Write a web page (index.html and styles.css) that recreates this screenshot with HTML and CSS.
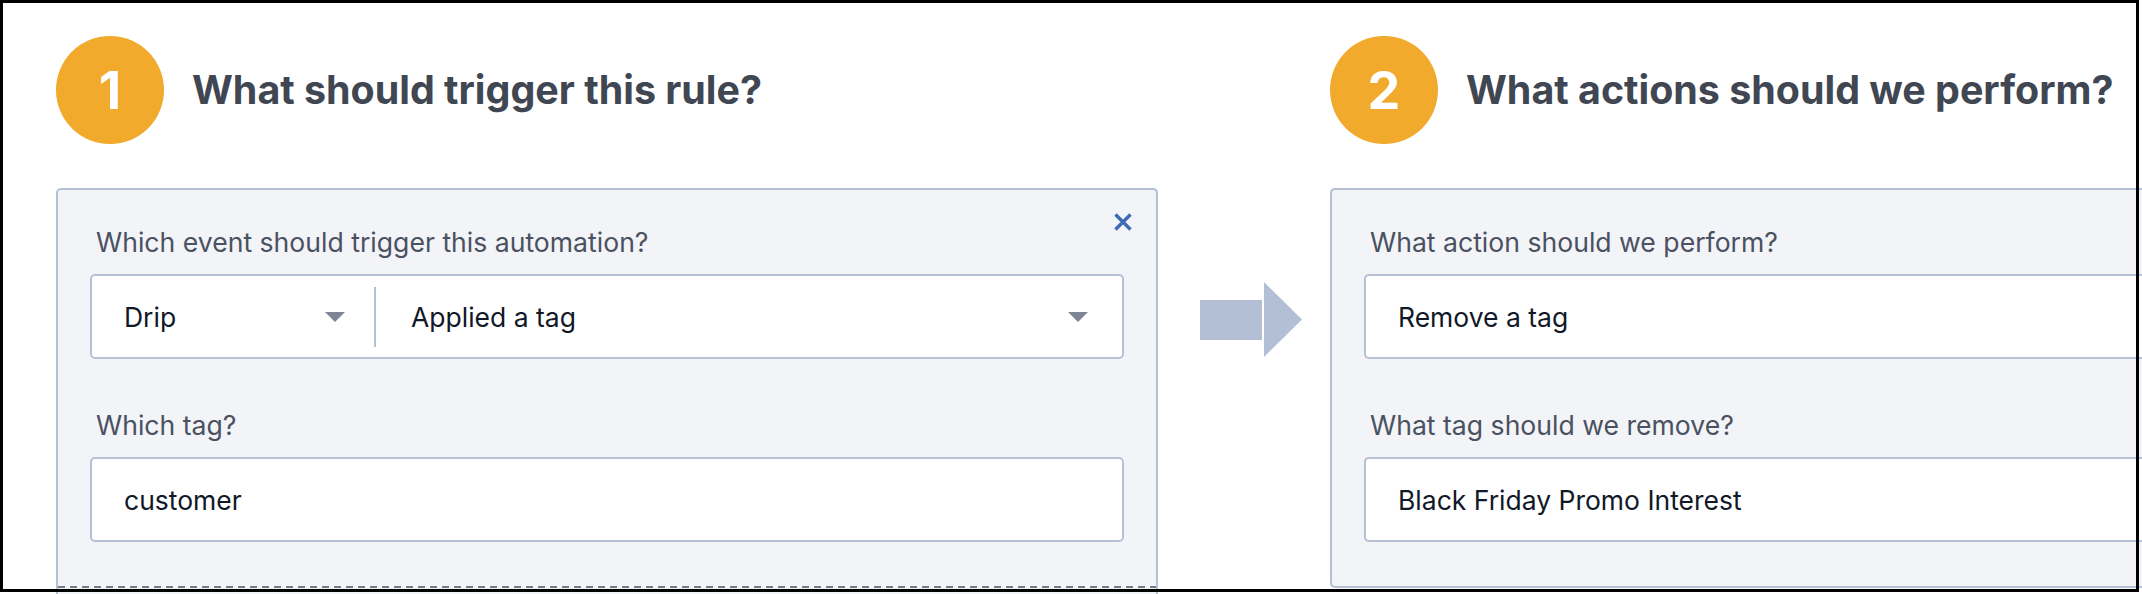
FILE: index.html
```html
<!DOCTYPE html>
<html lang="en">
<head>
<meta charset="utf-8">
<title>Rule builder</title>
<link rel="stylesheet" href="styles.css">
</head>
<body>
<main class="rule">
  <header class="step">
    <span class="step-num">1</span>
    <h2 class="step-title">What should trigger this rule?</h2>
  </header>
  <div class="spacer"></div>
  <header class="step">
    <span class="step-num">2</span>
    <h2 class="step-title">What actions should we perform?</h2>
  </header>

  <section class="panel panel-trigger">
    <button class="close" aria-label="Remove">
      <svg width="20" height="20" viewBox="0 0 20 20"><path d="M2.5 2.5 L17.5 17.5 M17.5 2.5 L2.5 17.5" stroke="#3d6bb4" stroke-width="3.4" stroke-linecap="butt" fill="none"/></svg>
    </button>
    <div class="field">
      <label class="label">Which event should trigger this automation?</label>
      <div class="box select-pair">
        <div class="seg seg-provider">
          <span class="value">Drip</span>
          <span class="caret"></span>
        </div>
        <span class="divider"></span>
        <div class="seg seg-event">
          <span class="value">Applied a tag</span>
          <span class="caret"></span>
        </div>
      </div>
    </div>
    <div class="field">
      <label class="label">Which tag?</label>
      <div class="box text-box"><span class="value">customer</span></div>
    </div>
    <div class="panel-more"></div>
  </section>

  <div class="arrow-cell">
    <svg class="arrow" width="102" height="75" viewBox="0 0 102 75"><rect x="0" y="18" width="62" height="40" fill="#b3bfd4"/><polygon points="64,0 102,37.5 64,75" fill="#b3bfd4"/></svg>
  </div>

  <section class="panel panel-action">
    <div class="field">
      <label class="label">What action should we perform?</label>
      <div class="box text-box"><span class="value">Remove a tag</span></div>
    </div>
    <div class="field">
      <label class="label">What tag should we remove?</label>
      <div class="box text-box"><span class="value">Black Friday Promo Interest</span></div>
    </div>
  </section>
</main>
<div class="frame"></div>
</body>
</html>
```
FILE: styles.css
```css
html, body {
  margin: 0;
  padding: 0;
  overflow: hidden;
  background: #ffffff;
}
body {
  font-family: Inter, "Noto Sans", sans-serif;
  width: 2142px;
  height: 594px;
  position: relative;
}

.rule {
  display: grid;
  grid-template-columns: 1102px 172px 812px;
  row-gap: 44px;
  align-items: start;
  padding: 36px 0 0 56px;
}

.step {
  display: flex;
  align-items: center;
  gap: 28px;
  height: 108px;
}
.step-num {
  width: 108px;
  height: 108px;
  border-radius: 50%;
  background: #f1aa2b;
  color: #ffffff;
  font-weight: 700;
  font-size: 52px;
  display: flex;
  align-items: center;
  justify-content: center;
  flex: none;
}
.step-title {
  margin: 0;
  font-size: 39.4px;
  font-weight: 700;
  color: #404753;
  white-space: nowrap;
}

.panel {
  position: relative;
  background: #f2f4f8;
  border: 2px solid #b4c0d4;
  border-radius: 5px;
  padding: 36px 32px 44px;
  display: flex;
  flex-direction: column;
  gap: 50px;
}
.panel-trigger {
  padding-bottom: 0;
  border-bottom: 0;
  border-bottom-left-radius: 0;
  border-bottom-right-radius: 0;
}
.panel-action {
  padding-right: 0;
  border-right: 0;
  border-top-right-radius: 0;
  border-bottom-right-radius: 0;
}
.panel-action .box {
  border-right: 0;
  border-top-right-radius: 0;
  border-bottom-right-radius: 0;
}

.close {
  position: absolute;
  top: 22px;
  right: 23px;
  width: 20px;
  height: 20px;
  padding: 0;
  border: 0;
  background: none;
  display: block;
}
.close svg { display: block; }

.field {
  display: flex;
  flex-direction: column;
  gap: 16px;
}
.label {
  display: block;
  font-size: 26.6px;
  line-height: 32px;
  color: #4a5160;
  padding-left: 6px;
  white-space: nowrap;
}

.box {
  height: 85px;
  box-sizing: border-box;
  background: #ffffff;
  border: 2px solid #b6c1d5;
  border-radius: 5px;
  display: flex;
  align-items: center;
}
.value {
  font-size: 26.5px;
  color: #111827;
  white-space: nowrap;
}
.text-box {
  padding: 0 32px;
}

.seg {
  display: flex;
  align-items: center;
  justify-content: space-between;
  height: 100%;
  box-sizing: border-box;
}
.seg-provider {
  width: 282px;
  flex: none;
  padding: 0 29px 0 32px;
}
.seg-event {
  flex: 1;
  padding: 0 34px 0 35px;
}
.divider {
  width: 2px;
  height: 60px;
  background: #b6c1d5;
  flex: none;
}
.caret {
  width: 0;
  height: 0;
  border-left: 10px solid transparent;
  border-right: 10px solid transparent;
  border-top: 10px solid #7e8595;
  flex: none;
}

.panel-more {
  margin: -6px -32px 6px;
  height: 2px;
  background: repeating-linear-gradient(to right, #737a88 0 7px, transparent 7px 12px);
}

.arrow-cell {
  padding: 94px 0 0 42px;
}
.arrow { display: block; }

.frame {
  position: absolute;
  top: 0;
  left: 0;
  width: 2139px;
  height: 592px;
  box-sizing: border-box;
  border: 3px solid #000000;
  pointer-events: none;
}
```
